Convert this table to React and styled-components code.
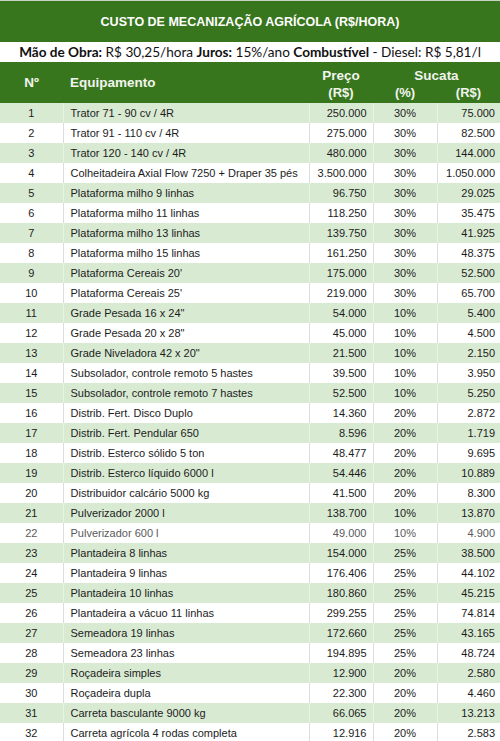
import React from 'react'
import styled, { createGlobalStyle } from 'styled-components'

const GREEN = '#38761d'
const LIGHT = '#d9ead3'

const items = [
  ['Trator 71 - 90 cv / 4R', '250.000', '30%', '75.000'],
  ['Trator 91 - 110 cv / 4R', '275.000', '30%', '82.500'],
  ['Trator 120 - 140 cv / 4R', '480.000', '30%', '144.000'],
  ['Colheitadeira Axial Flow 7250 + Draper 35 pés', '3.500.000', '30%', '1.050.000'],
  ['Plataforma milho 9 linhas', '96.750', '30%', '29.025'],
  ['Plataforma milho 11 linhas', '118.250', '30%', '35.475'],
  ['Plataforma milho 13 linhas', '139.750', '30%', '41.925'],
  ['Plataforma milho 15 linhas', '161.250', '30%', '48.375'],
  ['Plataforma Cereais 20\'', '175.000', '30%', '52.500'],
  ['Plataforma Cereais 25\'', '219.000', '30%', '65.700'],
  ['Grade Pesada 16 x 24"', '54.000', '10%', '5.400'],
  ['Grade Pesada 20 x 28"', '45.000', '10%', '4.500'],
  ['Grade Niveladora 42 x 20"', '21.500', '10%', '2.150'],
  ['Subsolador, controle remoto 5 hastes', '39.500', '10%', '3.950'],
  ['Subsolador, controle remoto 7 hastes', '52.500', '10%', '5.250'],
  ['Distrib. Fert. Disco Duplo', '14.360', '20%', '2.872'],
  ['Distrib. Fert. Pendular 650', '8.596', '20%', '1.719'],
  ['Distrib. Esterco sólido 5 ton', '48.477', '20%', '9.695'],
  ['Distrib. Esterco líquido 6000 l', '54.446', '20%', '10.889'],
  ['Distribuidor calcário 5000 kg', '41.500', '20%', '8.300'],
  ['Pulverizador 2000 l', '138.700', '10%', '13.870'],
  ['Pulverizador 600 l', '49.000', '10%', '4.900', true],
  ['Plantadeira 8 linhas', '154.000', '25%', '38.500'],
  ['Plantadeira 9 linhas', '176.406', '25%', '44.102'],
  ['Plantadeira 10 linhas', '180.860', '25%', '45.215'],
  ['Plantadeira a vácuo 11 linhas', '299.255', '25%', '74.814'],
  ['Semeadora 19 linhas', '172.660', '25%', '43.165'],
  ['Semeadora 23 linhas', '194.895', '25%', '48.724'],
  ['Roçadeira simples', '12.900', '20%', '2.580'],
  ['Roçadeira dupla', '22.300', '20%', '4.460'],
  ['Carreta basculante 9000 kg', '66.065', '20%', '13.213'],
  ['Carreta agrícola 4 rodas completa', '12.916', '20%', '2.583'],
]

const GlobalStyle = createGlobalStyle`
  html, body {
    margin: 0;
    padding: 0;
    background: #fff;
  }
  body {
    font-family: "Liberation Sans", Arial, sans-serif;
  }
`

const Sheet = styled.div`
  width: 500px;
  border-top: 1px solid #c9d3c4;
`

const Title = styled.div`
  height: 41px;
  background: ${GREEN};
  color: #fff;
  font-weight: bold;
  font-size: 12.5px;
  display: flex;
  align-items: center;
  justify-content: center;
`

const Info = styled.div`
  height: 20px;
  display: flex;
  align-items: center;
  justify-content: center;
  font-family: Lato, "Open Sans", sans-serif;
  font-size: 13.6px;
  color: #111;
  white-space: nowrap;
`

const Table = styled.table`
  width: 500px;
  border-collapse: collapse;
  table-layout: fixed;
`

const HeadCell = styled.th`
  background: ${GREEN};
  color: #f1f4ee;
  font-size: ${p => (p.$small ? '13px' : '13.5px')};
  font-weight: bold;
  height: ${p => (p.$tall ? '41px' : '20px')};
  padding: 0 ${p => p.$pad || 0}px;
  text-align: ${p => p.$align || 'center'};
  vertical-align: ${p => p.$valign || 'middle'};
`

const Row = styled.tr`
  height: 20px;
  background: ${p => (p.$odd ? LIGHT : '#fff')};
  color: ${p => (p.$muted ? '#5a5a5a' : '#1c1c1c')};
`

const Cell = styled.td`
  font-size: 11px;
  padding: 0 ${p => p.$pad || 0}px;
  text-align: ${p => p.$align || 'left'};
  white-space: nowrap;
  overflow: hidden;
  border-right: 1px solid ${p => (p.$odd ? '#e8f1e4' : '#dcdcdc')};
  &:last-child {
    border-right: none;
  }
`

export default function App() {
  return (
    <>
      <GlobalStyle />
      <Sheet>
        <Title>CUSTO DE MECANIZAÇÃO AGRÍCOLA (R$/HORA)</Title>
        <Info>
          <b>Mão de Obra:</b>&nbsp;R$ 30,25/hora&nbsp;<b>Juros:</b>&nbsp;15%/ano&nbsp;
          <b>Combustível</b>&nbsp;- Diesel: R$ 5,81/l
        </Info>
        <Table>
          <colgroup>
            <col style={{ width: 63 }} />
            <col style={{ width: 246 }} />
            <col style={{ width: 64 }} />
            <col style={{ width: 64 }} />
            <col style={{ width: 63 }} />
          </colgroup>
          <thead>
            <tr>
              <HeadCell rowSpan={2} $tall>Nº</HeadCell>
              <HeadCell rowSpan={2} $tall $align="left" $pad={7}>Equipamento</HeadCell>
              <HeadCell $valign="bottom">Preço</HeadCell>
              <HeadCell colSpan={2} $valign="bottom">Sucata</HeadCell>
            </tr>
            <tr>
              <HeadCell $small>(R$)</HeadCell>
              <HeadCell $small>(%)</HeadCell>
              <HeadCell $small>(R$)</HeadCell>
            </tr>
          </thead>
          <tbody>
            {items.map(([name, price, pct, scrap, muted], i) => {
              const odd = i % 2 === 0
              return (
                <Row key={i} $odd={odd} $muted={muted}>
                  <Cell $odd={odd} $align="center">{i + 1}</Cell>
                  <Cell $odd={odd} $pad={7}>{name}</Cell>
                  <Cell $odd={odd} $align="right" $pad={6}>{price}</Cell>
                  <Cell $odd={odd} $align="center">{pct}</Cell>
                  <Cell $odd={odd} $align="right" $pad={5}>{scrap}</Cell>
                </Row>
              )
            })}
          </tbody>
        </Table>
      </Sheet>
    </>
  )
}
